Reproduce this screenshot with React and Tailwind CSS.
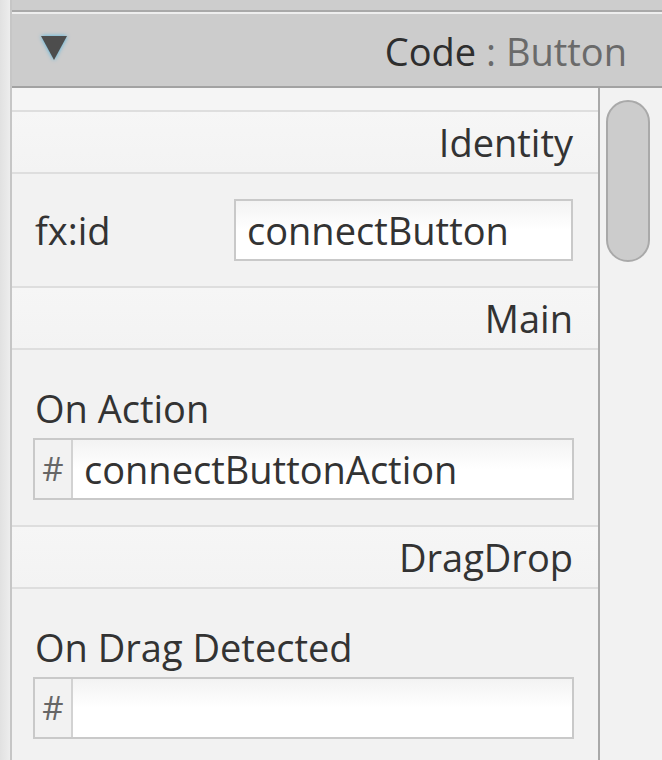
import React from 'react';

const font = { fontFamily: '"Open Sans", "Noto Sans", sans-serif' };

const SectionHeader = ({ title }) => (
  <div className="flex h-[62px] shrink-0 items-center justify-end border-b-2 border-[#dedede] bg-gradient-to-b from-[#f6f6f6] to-[#f3f3f3] pr-[25px] text-[38px] text-[#333]">
    {title}
  </div>
);

const HashField = ({ value }) => (
  <div className="flex h-[62px] w-[541px] border-2 border-[#c9c9c9] bg-white">
    <div className="flex w-[38px] items-center justify-center border-r-2 border-[#d2d2d2] bg-[#f2f2f2] text-[33px] text-[#666]">
      #
    </div>
    <div className="flex flex-1 items-center bg-gradient-to-b from-[#f3f3f3] via-white to-white pl-[11px] text-[38px] text-[#333]">
      {value}
    </div>
  </div>
);

const EventRow = ({ label, value }) => (
  <div className="flex shrink-0 flex-col border-b-2 border-[#dedede] pl-[21px] pt-[36px] pb-[25px]">
    <div className="h-[44px] pl-[2px] text-[38px] leading-[44px] text-[#333]">{label}</div>
    <div className="mt-[8px]">
      <HashField value={value} />
    </div>
  </div>
);

const App = () => {
  return (
    <div className="flex h-[760px] w-[662px] overflow-hidden bg-[#f2f2f2]" style={font}>
      {/* left edge strip */}
      <div className="h-full w-[12px] shrink-0 border-r-2 border-[#c6c6c6] bg-gradient-to-r from-[#e1e1e1] to-[#ededed]" />

      <div className="flex min-h-0 flex-1 flex-col">
        <div className="h-[10px] shrink-0 bg-[#cdcdcd]" />
        {/* title bar */}
        <div className="flex h-[78px] shrink-0 items-center justify-between border-t-2 border-b-2 border-t-[#a9a9a9] border-b-[#a2a2a2] bg-[#cccccc] pl-[28px] pr-[35px] shadow-[inset_0_2px_0_#eeeeee]">
          <svg width="28" height="26" viewBox="0 0 28 26" className="-mt-[2px] drop-shadow-[0_0_2px_#4ab3e0]">
            <polygon points="1,1 27,1 14,25" fill="#4d4d4d" />
          </svg>
          <div className="pt-[4px] text-[38px] leading-none">
            <span className="text-[#2e2e2e]">Code</span>
            <span className="text-[#6a6a6a]"> : Button</span>
          </div>
        </div>

        <div className="flex min-h-0 flex-1 overflow-hidden">
          {/* properties */}
          <div className="flex w-[586px] shrink-0 flex-col">
            <div className="h-[24px] shrink-0 border-b-2 border-[#dedede] bg-[#f5f5f5]" />
            <SectionHeader title="Identity" />
            <div className="flex h-[114px] shrink-0 items-center justify-between border-b-2 border-[#dedede] pl-[23px] pr-[25px]">
              <div className="text-[38px] text-[#333]">fx:id</div>
              <div className="flex h-[62px] w-[339px] items-center border-2 border-[#c9c9c9] bg-gradient-to-b from-[#f3f3f3] via-white to-white pl-[11px] text-[38px] text-[#333]">
                connectButton
              </div>
            </div>
            <SectionHeader title="Main" />
            <EventRow label="On Action" value="connectButtonAction" />
            <SectionHeader title="DragDrop" />
            <EventRow label="On Drag Detected" value="" />
          </div>

          {/* scrollbar */}
          <div className="flex-1 border-l-2 border-[#a9a9a9] bg-[#f2f2f2] pt-[12px] pl-[6px]">
            <div className="h-[162px] w-[44px] rounded-full border-2 border-[#a9a9a9] bg-[#cccccc]" />
          </div>
        </div>
      </div>
    </div>
  );
};

export default App;
